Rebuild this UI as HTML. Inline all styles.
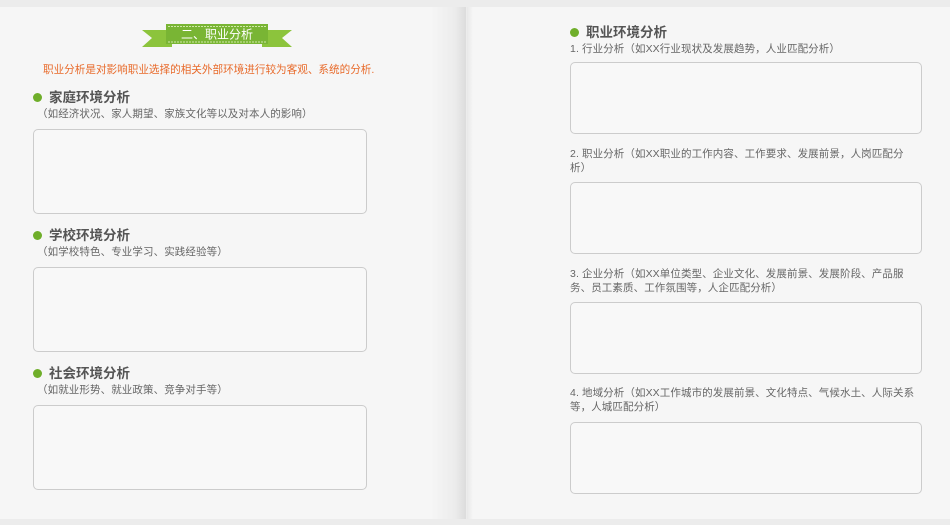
<!DOCTYPE html><html><head><meta charset="utf-8"><style>
*{margin:0;padding:0;box-sizing:border-box}
body{width:950px;height:525px;background:#ececec;position:relative;overflow:hidden;font-family:"Liberation Sans","Noto Sans CJK SC",sans-serif;color:#555}
.pg{position:absolute;top:7px;height:512px;background:#f6f6f6}
.l{left:0;width:466px;background:linear-gradient(to right,#f6f6f6 0,#f6f6f6 430px,#ececec 455px,#dcdcdc 466px)}
.r{left:467px;width:483px;background:linear-gradient(to right,#e8e8e8 0,#f6f6f6 6px)}
.a{position:absolute;white-space:nowrap}
.h{font-size:13.5px;font-weight:bold;color:#555;line-height:16px}
.dot{position:absolute;width:9px;height:9px;border-radius:50%;background:#6fae2a}
.s{font-size:10.5px;color:#666;letter-spacing:0.1px}
.box{position:absolute;background:#f8f8f8;border:1px solid #ccc;border-radius:5px}
</style></head><body>
<div class="pg l"></div><div class="pg r"></div>
<svg class="a" style="left:142px;top:24px" width="150" height="26"><polygon points="0,6 30,6 30,23 0,23 10,14" fill="#8cc43c"/><polygon points="150,6 120,6 120,23 150,23 140,14" fill="#8cc43c"/><rect x="24" y="0" width="102" height="20" fill="#79b534"/><line x1="26" y1="2.5" x2="124" y2="2.5" stroke="#cfe8a8" stroke-dasharray="2,1"/><line x1="26" y1="18" x2="124" y2="18" stroke="#cfe8a8" stroke-dasharray="2,1"/><text x="75" y="14.5" font-size="12" fill="#fff" text-anchor="middle" font-family="Liberation Sans,Noto Sans CJK SC,sans-serif">二、职业分析</text></svg>
<div class="a" style="left:43px;top:62px;font-size:10.6px;color:#e86a2a">职业分析是对影响职业选择的相关外部环境进行较为客观、系统的分析.</div>
<div class="dot" style="left:33px;top:93px"></div><div class="a h" style="left:49px;top:90px">家庭环境分析</div>
<div class="a s" style="left:37px;top:106px">（如经济状况、家人期望、家族文化等以及对本人的影响）</div>
<div class="box" style="left:33px;top:129px;width:334px;height:85px"></div>
<div class="dot" style="left:33px;top:231px"></div><div class="a h" style="left:49px;top:228px">学校环境分析</div>
<div class="a s" style="left:37px;top:244px">（如学校特色、专业学习、实践经验等）</div>
<div class="box" style="left:33px;top:267px;width:334px;height:85px"></div>
<div class="dot" style="left:33px;top:369px"></div><div class="a h" style="left:49px;top:366px">社会环境分析</div>
<div class="a s" style="left:37px;top:382px">（如就业形势、就业政策、竞争对手等）</div>
<div class="box" style="left:33px;top:405px;width:334px;height:85px"></div>

<div class="dot" style="left:570px;top:28px"></div><div class="a h" style="left:586px;top:25px">职业环境分析</div>
<div class="a s" style="left:570px;top:41px">1. 行业分析（如XX行业现状及发展趋势，人业匹配分析）</div>
<div class="box" style="left:570px;top:62px;width:352px;height:72px"></div>
<div class="a s" style="left:570px;top:147px;line-height:14px">2. 职业分析（如XX职业的工作内容、工作要求、发展前景，人岗匹配分<br>析）</div>
<div class="box" style="left:570px;top:182px;width:352px;height:72px"></div>
<div class="a s" style="left:570px;top:267px;line-height:14px">3. 企业分析（如XX单位类型、企业文化、发展前景、发展阶段、产品服<br>务、员工素质、工作氛围等，人企匹配分析）</div>
<div class="box" style="left:570px;top:302px;width:352px;height:72px"></div>
<div class="a s" style="left:570px;top:386px;line-height:14px">4. 地域分析（如XX工作城市的发展前景、文化特点、气候水土、人际关系<br>等，人城匹配分析）</div>
<div class="box" style="left:570px;top:422px;width:352px;height:72px"></div>
</body></html>
